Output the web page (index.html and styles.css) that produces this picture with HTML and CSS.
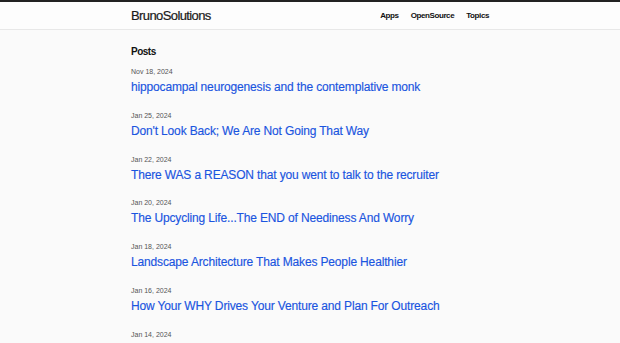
FILE: index.html
```html
<!doctype html>
<html lang="en">
  <head>
    <meta charset="UTF-8" />
    <meta name="viewport" content="width=device-width, initial-scale=1.0" />
    <title>BrunoSolutions</title>
    <link rel="stylesheet" href="styles.css">
  </head>
  <body>
    <header class="site-header">
      <div class="wrap header-inner">
        <a class="brand" href="#">BrunoSolutions</a>
        <nav class="nav">
          <a href="#">Apps</a>
          <a href="#">OpenSource</a>
          <a href="#">Topics</a>
        </nav>
      </div>
    </header>

    <main class="wrap">
      <h2 class="section-title">Posts</h2>
      <ul class="post-list">
        <li>
          <span class="post-date">Nov 18, 2024</span>
          <a class="post-link" href="#">hippocampal neurogenesis and the contemplative monk</a>
        </li>
        <li>
          <span class="post-date">Jan 25, 2024</span>
          <a class="post-link" href="#">Don't Look Back; We Are Not Going That Way</a>
        </li>
        <li>
          <span class="post-date">Jan 22, 2024</span>
          <a class="post-link" href="#">There WAS a REASON that you went to talk to the recruiter</a>
        </li>
        <li>
          <span class="post-date">Jan 20, 2024</span>
          <a class="post-link" href="#">The Upcycling Life...The END of Neediness And Worry</a>
        </li>
        <li>
          <span class="post-date">Jan 18, 2024</span>
          <a class="post-link" href="#">Landscape Architecture That Makes People Healthier</a>
        </li>
        <li>
          <span class="post-date">Jan 16, 2024</span>
          <a class="post-link" href="#">How Your WHY Drives Your Venture and Plan For Outreach</a>
        </li>
        <li>
          <span class="post-date">Jan 14, 2024</span>
        </li>
      </ul>
    </main>
  </body>
</html>
```

FILE: styles.css
```css
body {
  margin: 0;
  font-family: "Liberation Sans", Arial, sans-serif;
  background-color: #fafafa;
  color: #111;
}
.wrap {
  width: 358px;
  margin: 0 auto;
}
.site-header {
  border-top: 2px solid #222;
  border-bottom: 1px solid #e8e8e8;
  background-color: #fdfdfd;
}
.header-inner {
  display: flex;
  align-items: center;
  justify-content: space-between;
  height: 27px;
}
.brand {
  font-size: 13px;
  letter-spacing: -0.6px;
  color: #1a1a1a;
  text-decoration: none;
  -webkit-text-stroke: 0.2px #1a1a1a;
}
.nav {
  display: flex;
  gap: 12px;
}
.nav a {
  font-size: 8px;
  font-weight: bold;
  color: #111;
  text-decoration: none;
  letter-spacing: -0.4px;
}
.section-title {
  font-size: 10px;
  letter-spacing: -0.5px;
  margin: 16px 0 11px;
  color: #111;
}
.post-list {
  list-style: none;
  margin: 0;
  padding: 0;
}
.post-list li {
  margin-bottom: 16.8px;
}
.post-date {
  display: block;
  font-size: 7px;
  color: #555;
  margin-bottom: 2px;
}
.post-link {
  font-size: 12px;
  line-height: 15px;
  color: #1a55e0;
  text-decoration: none;
  letter-spacing: -0.15px;
  -webkit-text-stroke: 0.15px #1a55e0;
}
```
